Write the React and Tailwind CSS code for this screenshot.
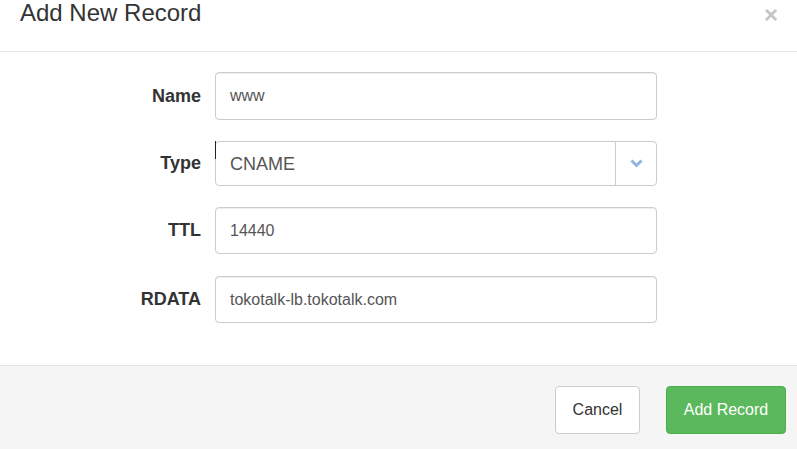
const font = { fontFamily: '"Liberation Sans", Arial, sans-serif' };

function Row({ label, children, className = "" }) {
  return (
    <div className={`flex items-center ${className}`}>
      <label className="w-[201px] text-right text-[18px] font-bold text-[#333]">{label}</label>
      <div className="ml-[14px] w-[442px]">{children}</div>
    </div>
  );
}

function TextInput({ value, h }) {
  return (
    <div
      className={`flex items-center rounded-[4px] border border-[#ccc] bg-white pl-[14px] text-[16px] text-[#555] shadow-[inset_0_1px_1px_rgba(0,0,0,0.075)] ${h}`}
    >
      {value}
    </div>
  );
}

export default function App() {
  return (
    <div className="h-[449px] w-[797px] overflow-hidden bg-white" style={font}>
      {/* header */}
      <div className="relative h-[52px] border-b border-[#e5e5e5]">
        <h4 className="pl-[20px] text-[24px] leading-[25px] text-[#333]">Add New Record</h4>
        <button className="absolute right-[19px] top-[1px] text-[24px] font-bold leading-[28px] text-[#c6c6c6]">
          ×
        </button>
      </div>

      {/* body */}
      <div className="h-[313px] pt-[20px]">
        <Row label="Name" className="mb-[21px]">
          <TextInput value="www" h="h-[48px]" />
        </Row>
        <Row label="Type" className="mb-[21px]">
          <div className="relative flex h-[45px] items-center rounded-[4px] border border-[#ccc] bg-white">
            <span className="absolute -left-px -top-px h-[18px] w-px bg-[#222]" />
            <span className="flex-1 pl-[14px] pt-[2px] text-[18px] text-[#555]">CNAME</span>
            <span className="flex h-full w-[41px] items-center justify-center border-l border-[#ccc]">
              <svg width="13" height="9" viewBox="0 0 13 9">
                <polyline points="1.5,1.5 6.5,6.5 11.5,1.5" fill="none" stroke="#8db5e0" strokeWidth="3" />
              </svg>
            </span>
          </div>
        </Row>
        <Row label="TTL" className="mb-[22px]">
          <TextInput value="14440" h="h-[47px]" />
        </Row>
        <Row label="RDATA">
          <TextInput value="tokotalk-lb.tokotalk.com" h="h-[47px]" />
        </Row>
      </div>

      {/* footer */}
      <div className="flex h-[84px] items-start justify-end gap-[26px] border-t border-[#e5e5e5] bg-[#f5f5f5] pr-[11px] pt-[20px]">
        <button className="h-[48px] w-[85px] rounded-[4px] border border-[#ccc] bg-white text-[16px] text-[#333]">
          Cancel
        </button>
        <button className="h-[48px] w-[120px] rounded-[4px] border border-[#4cae4c] bg-[#5cb85c] text-[16px] text-white">
          Add Record
        </button>
      </div>
    </div>
  );
}
